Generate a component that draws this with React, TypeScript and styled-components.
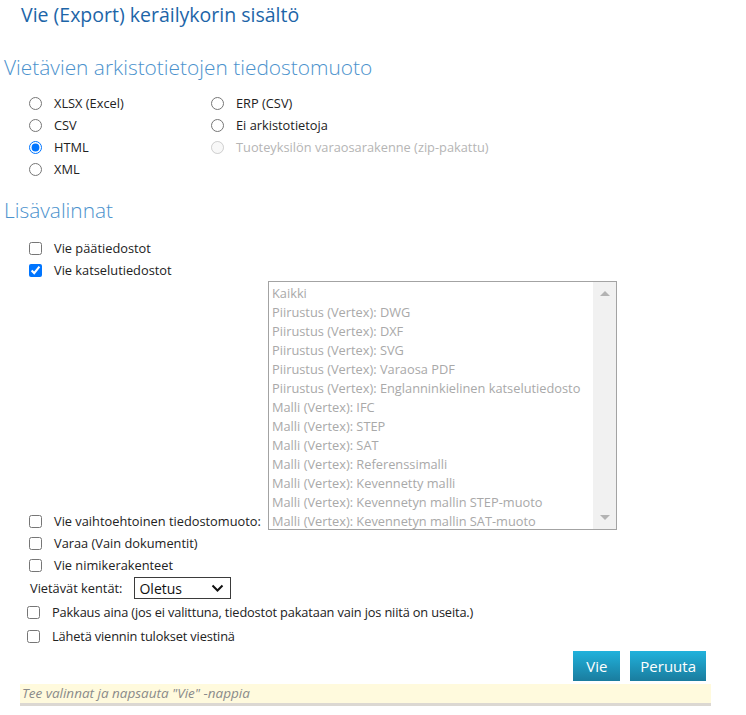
import React from "react"
import styled, { createGlobalStyle } from "styled-components"

const GlobalStyle = createGlobalStyle`
body {
  margin: 0;
  background: #fff;
  font-family: "Open Sans", "Noto Sans", sans-serif;
  font-size: 12.8px;
  color: #222;
}
`

const Page = styled.div`
width: 746px;
padding-top: 3px;
`

const Title = styled.h1`
margin: 0 0 0 21px;
font-size: 19.5px;
font-weight: 400;
line-height: 24px;
color: #1d65a8;
`

const SectionTitle = styled.h2<{top: number}>`
margin: ${props => props.top}px 0 0 4px;
font-size: 20.9px;
font-weight: 300;
line-height: 28px;
color: #4b92cd;
`

const RadioGrid = styled.div`
display: grid;
grid-template-columns: 182px auto;
grid-auto-flow: column;
grid-template-rows: repeat(4, 22px);
margin: 11px 0 0 29px;
`

const Option = styled.label<{disabled?: boolean}>`
display: flex;
align-items: center;
gap: 12px;
height: 22px;
color: ${props => props.disabled ? "#b5b5b5" : "#222"};
white-space: nowrap;
`

const Radio = styled.input.attrs({ type: "radio" })`
margin: 0;
width: 13px;
height: 13px;
`

const CheckList = styled.div<{top: number, left?: number}>`
display: flex;
flex-direction: column;
margin: ${props => props.top}px 0 0 ${props => props.left ?? 29}px;
`

const CheckRow = styled.label<{tall?: boolean, width?: number}>`
display: flex;
align-items: center;
gap: 12px;
height: ${props => props.tall ? 24 : 22}px;
${props => props.width ? `width: ${props.width}px; flex-shrink: 0;` : ""}
white-space: nowrap;
`

const Check = styled.input.attrs({ type: "checkbox" })`
margin: 0;
width: 13px;
height: 13px;
`

const AltRow = styled.div`
display: flex;
align-items: flex-end;
`

const ListBox = styled.div`
display: flex;
flex-shrink: 0;
width: 347px;
height: 247px;
margin: 0 0 2px 3px;
border: 1px solid #a3a3a3;
`

const ListItems = styled.div`
flex: 1;
padding: 2px 0 0 3px;
overflow: hidden;
`

const ListItem = styled.div`
height: 19px;
line-height: 19px;
color: #a9a9a9;
white-space: nowrap;
`

const ScrollTrack = styled.div`
width: 23px;
background: #f1f1f1;
display: flex;
flex-direction: column;
justify-content: space-between;
align-items: center;
padding: 9px 0 9px;
`

const Arrow = styled.span<{down?: boolean}>`
width: 0;
height: 0;
border-left: 5px solid transparent;
border-right: 5px solid transparent;
${props => props.down ? "border-top: 5px solid #b3b3b3;" : "border-bottom: 5px solid #b3b3b3;"}
`

const FieldRow = styled.div`
display: flex;
align-items: center;
gap: 12px;
height: 24px;
margin-left: 30px;
`

const Dropdown = styled.div`
display: flex;
align-items: center;
justify-content: space-between;
width: 97px;
height: 22px;
padding: 0 6px 0 4px;
box-sizing: border-box;
border: 1px solid #3b3b3b;
font-size: 14px;
color: #111;
`

const Narrow = styled.div`
letter-spacing: -0.15px;
`

const Actions = styled.div`
display: flex;
justify-content: flex-end;
gap: 10px;
width: 706px;
margin-top: 3px;
`

const Button = styled.button`
min-width: 47px;
height: 30px;
padding: 0 10px;
border: none;
background: linear-gradient(#21b2dc, #1a7c9e);
color: #fff;
font-family: inherit;
font-size: 15px;
`

const Footer = styled.div`
width: 689px;
height: 19px;
margin: 3px 0 0 20px;
padding-left: 2px;
background: #fffadd;
border-bottom: 3px solid #dcd8d2;
color: #8a8a8a;
font-size: 13.5px;
font-style: italic;
line-height: 19px;
`

const listItems = [
  "Kaikki",
  "Piirustus (Vertex): DWG",
  "Piirustus (Vertex): DXF",
  "Piirustus (Vertex): SVG",
  "Piirustus (Vertex): Varaosa PDF",
  "Piirustus (Vertex): Englanninkielinen katselutiedosto",
  "Malli (Vertex): IFC",
  "Malli (Vertex): STEP",
  "Malli (Vertex): SAT",
  "Malli (Vertex): Referenssimalli",
  "Malli (Vertex): Kevennetty malli",
  "Malli (Vertex): Kevennetyn mallin STEP-muoto",
  "Malli (Vertex): Kevennetyn mallin SAT-muoto",
]

const App: React.FC = () => {
  return <Page>
    <GlobalStyle/>
    <Title>Vie (Export) keräilykorin sisältö</Title>
    <SectionTitle top={26}>Vietävien arkistotietojen tiedostomuoto</SectionTitle>
    <RadioGrid>
      <Option><Radio name="fmt"/>XLSX (Excel)</Option>
      <Option><Radio name="fmt"/>CSV</Option>
      <Option><Radio name="fmt" defaultChecked/>HTML</Option>
      <Option><Radio name="fmt"/>XML</Option>
      <Option><Radio name="fmt"/>ERP (CSV)</Option>
      <Option><Radio name="fmt"/>Ei arkistotietoja</Option>
      <Option disabled><Radio name="fmt" disabled/>Tuoteyksilön varaosarakenne (zip-pakattu)</Option>
    </RadioGrid>
    <SectionTitle top={16}>Lisävalinnat</SectionTitle>
    <CheckList top={13}>
      <CheckRow><Check/>Vie päätiedostot</CheckRow>
      <CheckRow><Check defaultChecked/>Vie katselutiedostot</CheckRow>
      <AltRow>
        <CheckRow width={236}><Check/>Vie vaihtoehtoinen tiedostomuoto:</CheckRow>
        <ListBox>
          <ListItems>
            {listItems.map(item => <ListItem key={item}>{item}</ListItem>)}
          </ListItems>
          <ScrollTrack><Arrow/><Arrow down/></ScrollTrack>
        </ListBox>
      </AltRow>
      <CheckRow><Check/>Varaa (Vain dokumentit)</CheckRow>
      <CheckRow><Check/>Vie nimikerakenteet</CheckRow>
    </CheckList>
    <FieldRow>
      Vietävät kentät:
      <Dropdown>
        Oletus
        <svg width="13" height="8" viewBox="0 0 13 8"><path d="M1.5 1.5 L6.5 6.5 L11.5 1.5" fill="none" stroke="#111" strokeWidth="2"/></svg>
      </Dropdown>
    </FieldRow>
    <CheckList top={0} left={27}>
      <CheckRow tall><Check/><Narrow>Pakkaus aina (jos ei valittuna, tiedostot pakataan vain jos niitä on useita.)</Narrow></CheckRow>
      <CheckRow tall><Check/><Narrow>Lähetä viennin tulokset viestinä</Narrow></CheckRow>
    </CheckList>
    <Actions>
      <Button>Vie</Button>
      <Button>Peruuta</Button>
    </Actions>
    <Footer>Tee valinnat ja napsauta "Vie" -nappia</Footer>
  </Page>
}

export default App
